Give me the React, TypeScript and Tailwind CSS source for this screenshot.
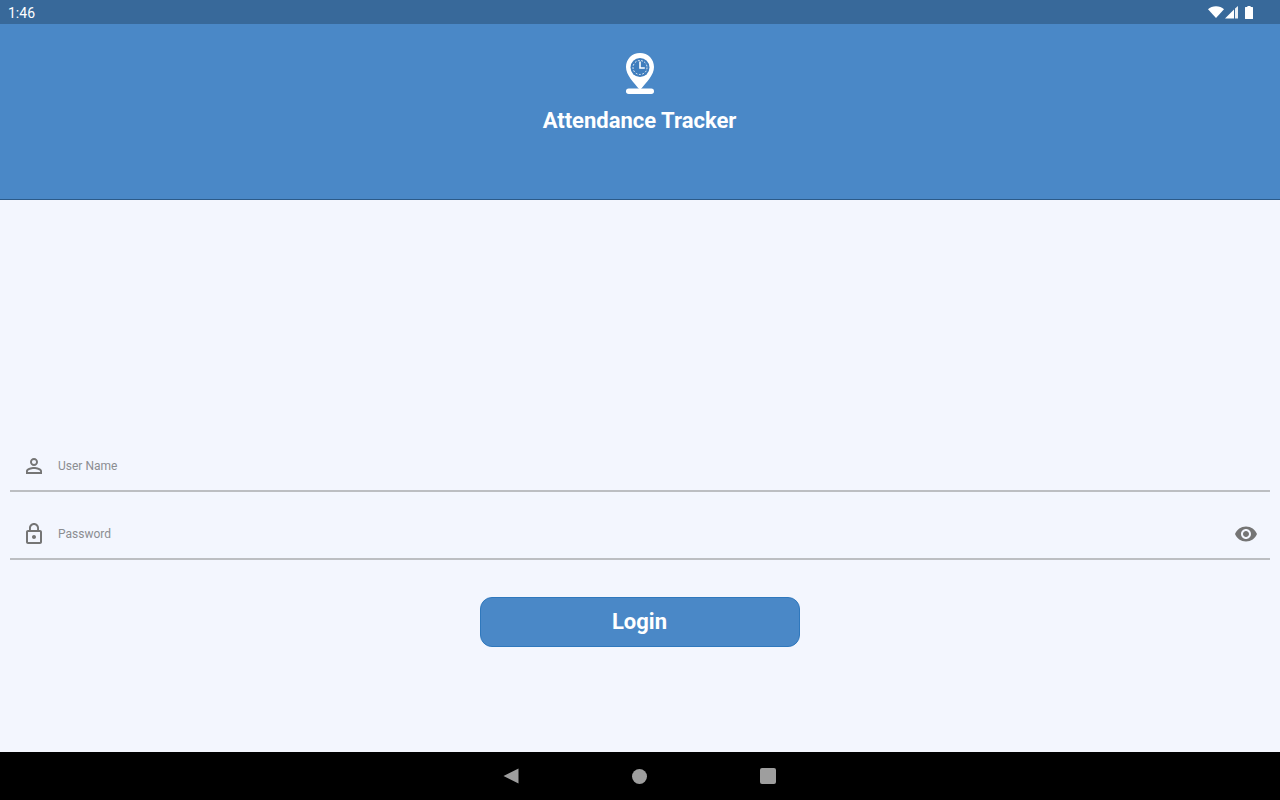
function StatusIcons() {
  return (
    <div className="flex items-center">
      {/* wifi */}
      <svg width="16" height="12" viewBox="0 0 16 12">
        <path d="M0 3.2C2 1.3 4.8 0.3 8 0.3s6 1 8 2.9L8 12z" fill="#fff" />
      </svg>
      {/* signal */}
      <svg width="13" height="13" viewBox="0 0 13 13" className="ml-[1px]">
        <path d="M9 3.400V12.500H0z" fill="#fff" />
        <path d="M10 2.400L13 0V12.500H10z" fill="#fff" fillOpacity="0.9" />
      </svg>
      {/* battery */}
      <svg width="8" height="13" viewBox="0 0 8 13" className="ml-[7px]">
        <path d="M2.400 0h3.200v1H7.400a.6.6 0 0 1 .6.6v10.800a.6.6 0 0 1-.6.6H.6a.6.6 0 0 1-.6-.6V1.600a.6.6 0 0 1 .6-.6h1.800z" fill="#fff" />
      </svg>
    </div>
  );
}

function PinLogo() {
  return (
    <svg width="32" height="44" viewBox="0 0 32 44">
      <path d="M16 1C7.900 1 2 7.200 2 15c0 8 7.500 15.500 14 23 6.500-7.500 14-15 14-23C30 7.200 24.100 1 16 1z" fill="#fff" />
      <rect x="2" y="36.500" width="28" height="5.500" rx="2.700" fill="#fff" />
      <circle cx="16" cy="15.500" r="9.500" fill="#3f7dbd" />
      <circle cx="16" cy="15.500" r="7" fill="none" stroke="#fff" strokeWidth="0.9" strokeDasharray="1.800 1.600" />
      <path d="M15.200 9.500h1.600v5.700h4v1.600h-5.600z" fill="#fff" />
    </svg>
  );
}

function UserIcon() {
  return (
    <svg width="24" height="24" viewBox="0 0 24 24" fill="#757575">
      <path d="M12 5.900a2.100 2.100 0 1 1 0 4.200 2.100 2.100 0 0 1 0-4.200m0 9c2.970 0 6.100 1.460 6.100 2.100v1.100H5.900V17c0-.64 3.130-2.100 6.100-2.100M12 4C9.790 4 8 5.790 8 8s1.790 4 4 4 4-1.790 4-4-1.790-4-4-4zm0 9c-2.670 0-8 1.340-8 4v3h16v-3c0-2.660-5.330-4-8-4z" />
    </svg>
  );
}

function LockIcon() {
  return (
    <svg width="24" height="24" viewBox="0 0 24 24" fill="#757575">
      <path d="M18 8h-1V6c0-2.760-2.240-5-5-5S7 3.240 7 6v2H6c-1.100 0-2 .9-2 2v10c0 1.100.9 2 2 2h12c1.100 0 2-.9 2-2V10c0-1.100-.9-2-2-2zM8.900 6c0-1.710 1.390-3.100 3.100-3.100s3.100 1.390 3.100 3.100v2H8.900V6zM18 20H6V10h12v10zm-6-3c1.100 0 2-.9 2-2s-.9-2-2-2-2 .9-2 2 .9 2 2 2z" />
    </svg>
  );
}

function EyeIcon() {
  return (
    <svg width="24" height="24" viewBox="0 0 24 24" fill="#757575">
      <path d="M12 4.500C7 4.500 2.730 7.610 1 12c1.730 4.390 6 7.500 11 7.500s9.270-3.110 11-7.500c-1.730-4.390-6-7.500-11-7.500zM12 17c-2.760 0-5-2.240-5-5s2.240-5 5-5 5 2.240 5 5-2.240 5-5 5zm0-8c-1.660 0-3 1.340-3 3s1.340 3 3 3 3-1.340 3-3-1.340-3-3-3z" />
    </svg>
  );
}

function Field({ icon, label, trailing }: { icon: React.ReactNode; label: string; trailing?: React.ReactNode }) {
  return (
    <div className="flex h-[49px] items-center border-b-2 border-[#bcbec2] pr-[12px] pb-[2px] pl-[12px]">
      <div className="flex w-[24px] justify-center">{icon}</div>
      <span className="ml-[12px] flex-1 text-[12px] text-[#8b8d91]">{label}</span>
      {trailing}
    </div>
  );
}

export default function App() {
  return (
    <div className="flex h-[800px] w-[1280px] flex-col overflow-hidden bg-[#f3f6fe] font-['Roboto',sans-serif]">
      {/* status bar */}
      <div className="flex h-[24px] shrink-0 items-center justify-between bg-[#38699a] pr-[27px] pl-[8px]">
        <span className="pt-[2px] text-[14px] text-white">1:46</span>
        <StatusIcons />
      </div>

      {/* header */}
      <div className="flex h-[176px] shrink-0 flex-col items-center border-b border-[#2c5a88] bg-[#4a88c7] pt-[28px]">
        <PinLogo />
        <h1 className="mt-[11px] pr-[1px] text-[22px] leading-[28px] font-bold text-white">Attendance Tracker</h1>
      </div>

      {/* form */}
      <div className="flex flex-1 flex-col px-[10px] pt-[243px]">
        <Field icon={<UserIcon />} label="User Name" />
        <div className="mt-[19px]">
          <Field icon={<LockIcon />} label="Password" trailing={<EyeIcon />} />
        </div>
        <button className="mx-auto mt-[37px] flex h-[50px] w-[320px] items-center justify-center rounded-[12px] border border-[#2f78bd] bg-[#4a88c7] pr-[1px] pb-[2px] text-[22px] font-bold text-white">
          Login
        </button>
      </div>

      {/* nav bar */}
      <div className="flex h-[48px] shrink-0 items-center justify-center bg-black pr-[2px]">
        <svg width="16" height="16" viewBox="0 0 16 16" className="mr-[113px]">
          <path d="M15.500 0.500V15.500L0.500 8z" fill="#9e9e9e" />
        </svg>
        <div className="h-[15px] w-[15px] rounded-full bg-[#9e9e9e]" />
        <div className="ml-[113px] h-[16px] w-[16px] rounded-[2px] bg-[#9e9e9e]" />
      </div>
    </div>
  );
}
